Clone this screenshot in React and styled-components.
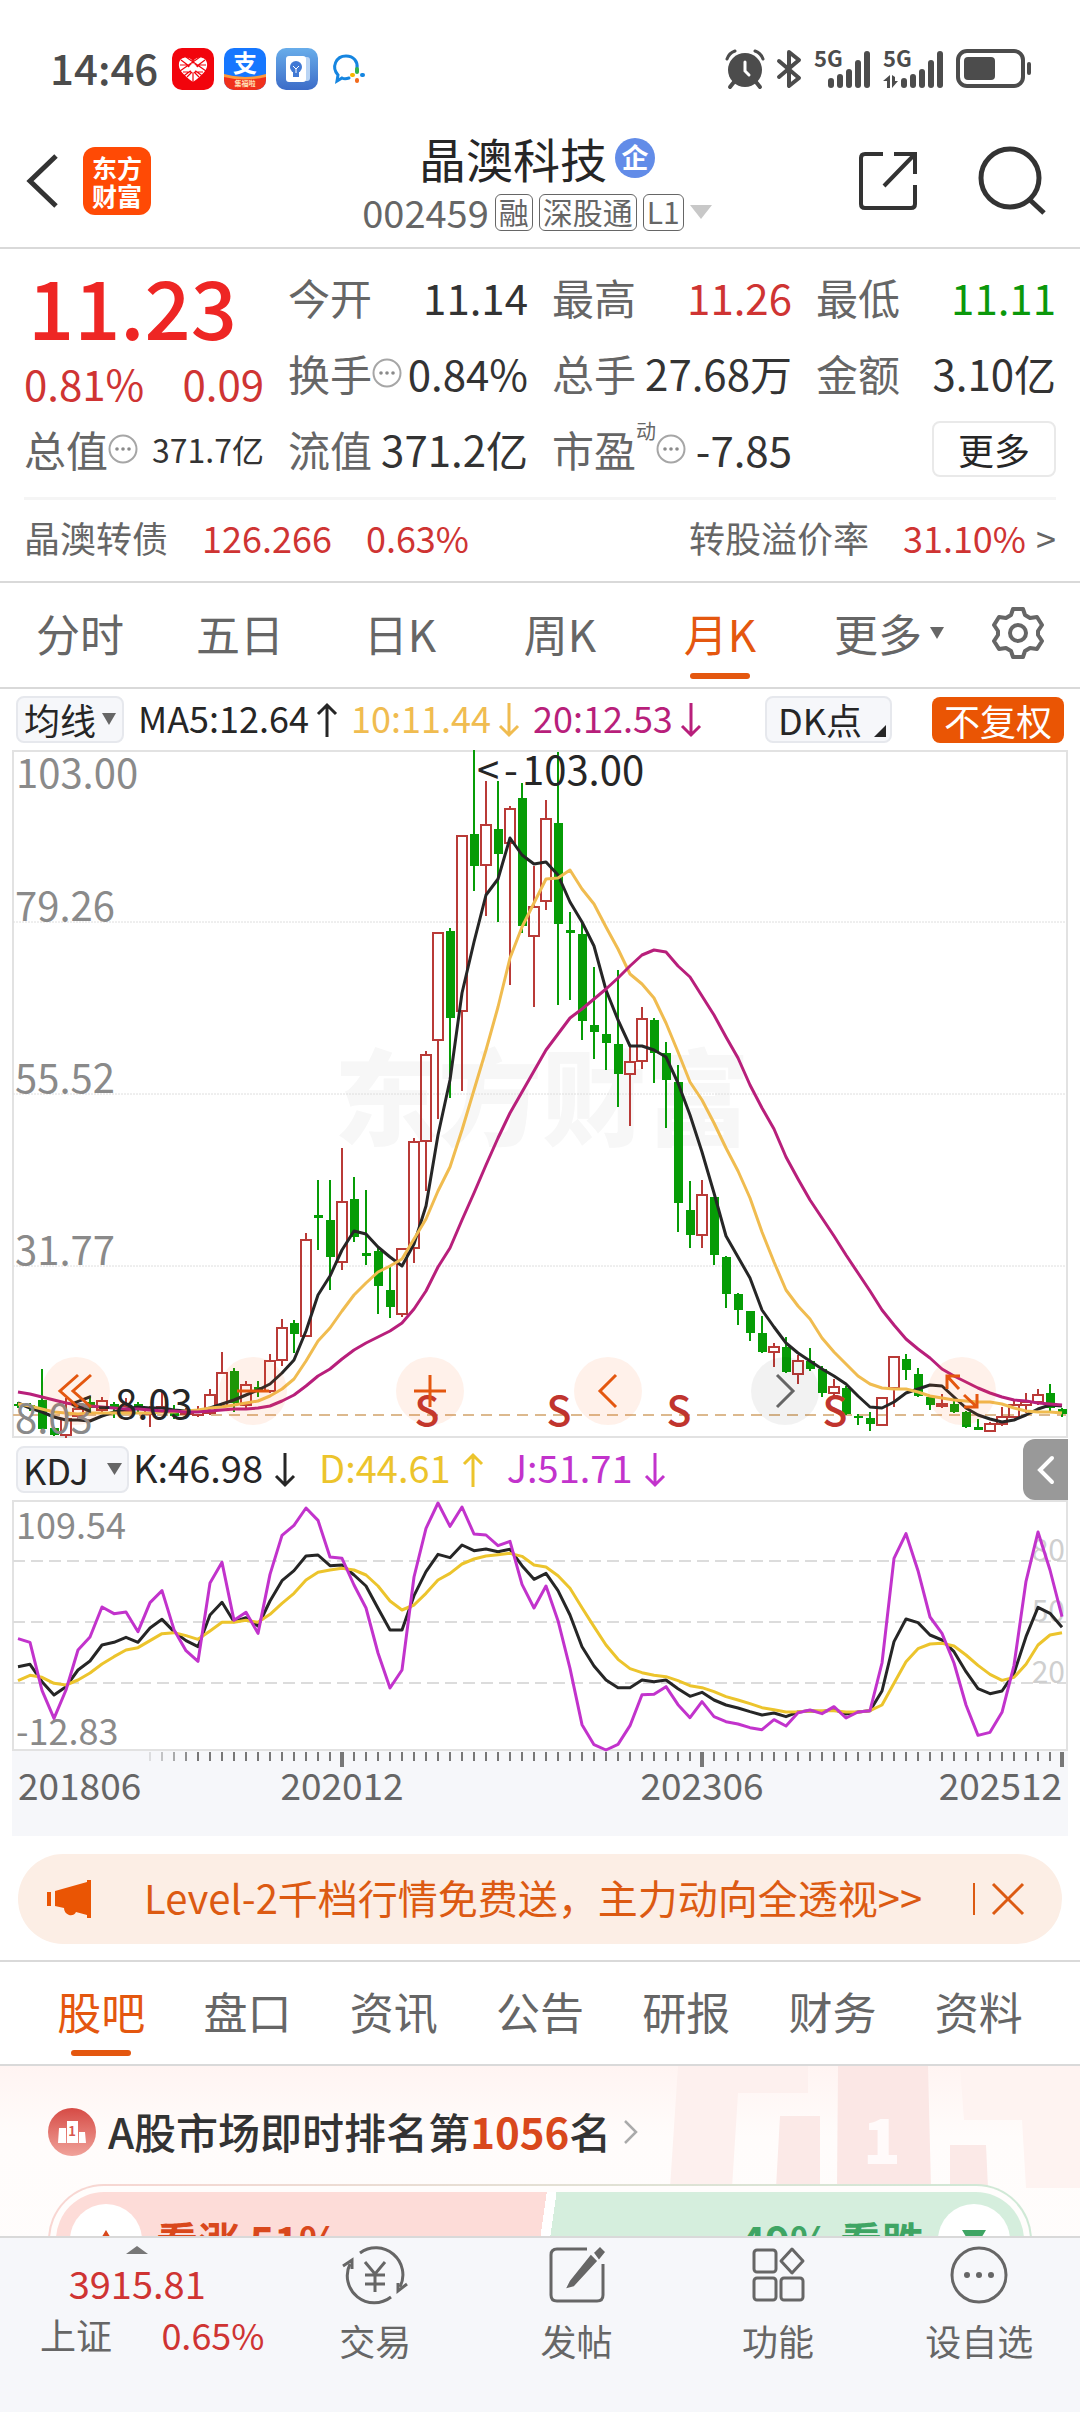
import React from "react";
import styled, { createGlobalStyle } from "styled-components";

const color = {
  ink: "#262626",
  text: "#333333",
  label: "#666666",
  muted: "#8a8a8a",
  rise: "#cf3433",
  price: "#ee2624",
  fall: "#0b980b",
  brand: "#e4570f",
  line: "#d9d9d9",
  panel: "#f6f7fa",
  ma10: "#f0bc50",
  ma20: "#b81f7b",
  kdjD: "#ecc42c",
  kdjJ: "#c233cc",
};

const GlobalStyle = createGlobalStyle`
  * { box-sizing: border-box; }
  body { margin: 0; background: #fff; }
  body, button {
    font-family: "Noto Sans CJK SC", "Noto Sans", sans-serif;
    color: ${color.ink};
  }
  button {
    border: 0;
    padding: 0;
    margin: 0;
    background: none;
    cursor: pointer;
  }
  a { color: inherit; text-decoration: none; }
  svg { display: block; flex: none; overflow: visible; }
  h1, h2, p, dl, dt, dd { margin: 0; font-weight: 400; }
`;

const Screen = styled.div`
  height: 100vh;
  display: flex;
  flex-direction: column;
  background: #fff;
`;

const Content = styled.main`
  flex: 1;
  min-height: 0;
  overflow: hidden;
`;

/* ---------- status bar ---------- */

const StatusBar = styled.div`
  display: flex;
  align-items: center;
  gap: 14px;
  height: 115px;
  padding: 22px 48px 0 50px;
  color: #4c4c4c;
`;

const Clock = styled.span`
  font-size: 42px;
  line-height: 42px;
  font-weight: 500;
  padding-bottom: 4px;
`;

const StatusIcons = styled.div`
  display: flex;
  align-items: center;
  gap: ${(p) => p.$gap}px;
  margin-left: ${(p) => (p.$end ? "auto" : "0")};
`;

/* ---------- header ---------- */

const Header = styled.header`
  display: grid;
  grid-template-columns: 1fr auto 1fr;
  align-items: center;
  height: 134px;
  padding: 0 32px 0 26px;
  border-bottom: 2px solid ${color.line};
`;

const HeaderSide = styled.div`
  display: flex;
  align-items: center;
  gap: ${(p) => p.$gap}px;
  justify-content: ${(p) => (p.$end ? "flex-end" : "flex-start")};
`;

const Logo = styled.a`
  display: flex;
  flex-direction: column;
  align-items: center;
  justify-content: center;
  width: 68px;
  height: 68px;
  border-radius: 12px;
  background: #ff4a05;
  color: #fff;
  font-size: 25px;
  line-height: 28px;
  font-weight: 700;
`;

const TitleBlock = styled.div`
  display: flex;
  flex-direction: column;
  align-items: center;
  padding-top: 2px;
`;

const TitleRow = styled.div`
  display: flex;
  align-items: center;
  gap: 8px;
`;

const Title = styled.h1`
  font-size: 47px;
  line-height: 60px;
`;

const Badge = styled.span`
  width: 40px;
  height: 40px;
  border-radius: 50%;
  background: #628ce8;
  color: #fff;
  font-size: 27px;
  line-height: 37px;
  font-weight: 700;
  text-align: center;
`;

const CodeRow = styled.div`
  display: flex;
  align-items: center;
  gap: 6px;
  color: ${color.label};
  font-size: 38px;
  line-height: 48px;
`;

const Tag = styled.span`
  height: 37px;
  padding: 0 3px;
  border: 1px solid ${color.label};
  border-radius: 6px;
  font-size: 30px;
  line-height: 32px;
`;

/* ---------- quote ---------- */

const Quote = styled.section`
  padding: 10px 24px 8px;
  border-bottom: 2px solid ${color.line};
`;

const QuoteGrid = styled.div`
  display: grid;
  grid-template-columns: repeat(4, 1fr);
  grid-auto-rows: 76px;
  column-gap: 24px;
`;

const PriceBlock = styled.div`
  grid-row: span 2;
`;

const Price = styled.p`
  padding-left: 4px;
  font-size: 81px;
  line-height: 92px;
  font-weight: 500;
  color: ${color.price};
`;

const Change = styled.p`
  display: flex;
  justify-content: space-between;
  font-size: 42px;
  line-height: 64px;
  color: ${color.rise};
`;

const Cell = styled.dl`
  display: flex;
  align-items: center;
  line-height: 60px;
`;

const CellLabel = styled.dt`
  display: flex;
  align-items: center;
  font-size: 42px;
  color: ${color.label};
  white-space: nowrap;
`;

const CellValue = styled.dd`
  margin-left: auto;
  font-size: ${(p) => (p.$small ? 32 : 42)}px;
  color: ${(p) => color[p.$tone] || color.text};
  white-space: nowrap;
`;

const Sup = styled.sup`
  align-self: flex-start;
  font-size: 20px;
  line-height: 24px;
`;

const MoreButton = styled.button`
  align-self: center;
  justify-self: end;
  width: 124px;
  height: 56px;
  border: 2px solid #e9e9e9;
  border-radius: 8px;
  font-size: 36px;
  line-height: 48px;
`;

const BondRow = styled.a`
  display: flex;
  align-items: center;
  gap: 34px;
  height: 76px;
  margin-top: 10px;
  border-top: 3px solid #f5f5f5;
  font-size: 36px;
  line-height: 48px;
  color: ${color.label};
`;

const Rise = styled.span`
  color: ${color.rise};
`;

const Premium = styled.span`
  display: flex;
  align-items: center;
  gap: 10px;
`;

const PushRight = styled.span`
  margin-left: auto;
`;

/* ---------- tabs ---------- */

const Tabs = styled.nav`
  display: grid;
  grid-template-columns: ${(p) => p.$columns};
  height: ${(p) => p.$height}px;
  padding: 0 ${(p) => p.$pad}px;
  border-bottom: 2px solid ${color.line};
`;

const Tab = styled.button`
  position: relative;
  display: flex;
  align-items: center;
  justify-content: center;
  gap: 8px;
  padding-bottom: 4px;
  font-size: 44px;
  line-height: 60px;
  color: ${(p) => (p.$active ? color.brand : color.label)};

  &::after {
    content: "";
    display: ${(p) => (p.$active ? "block" : "none")};
    position: absolute;
    bottom: 8px;
    left: calc(50% - 30px);
    width: 60px;
    height: 6px;
    border-radius: 3px;
    background: ${color.brand};
  }
`;

/* ---------- indicator rows ---------- */

const Legend = styled.div`
  display: flex;
  align-items: center;
  gap: ${(p) => p.$gap}px;
  height: ${(p) => p.$height}px;
  padding: 0 16px;
`;

const Chip = styled.button`
  position: relative;
  display: flex;
  align-items: center;
  justify-content: space-between;
  height: 47px;
  width: ${(p) => p.$width}px;
  padding: 0 ${(p) => p.$pad}px 2px;
  border: 2px solid #e6e8ed;
  border-radius: 8px;
  background: ${color.panel};
  font-size: 36px;
  line-height: 40px;
  white-space: nowrap;
`;

const AdjustButton = styled.button`
  width: 132px;
  height: 46px;
  margin-left: 26px;
  border-radius: 8px;
  background: #ea5504;
  color: #fff;
  font-size: 36px;
  line-height: 42px;
`;

const Corner = styled.span`
  position: absolute;
  right: 4px;
  bottom: 4px;
  border-left: 12px solid transparent;
  border-bottom: 12px solid ${color.ink};
`;

const Reading = styled.span`
  display: flex;
  align-items: center;
  gap: ${(p) => p.$gap}px;
  font-size: ${(p) => p.$size}px;
  line-height: 48px;
  color: ${(p) => p.$tone};
`;

const ReadingText = styled.span`
  padding-bottom: 6px;
`;

const CollapseButton = styled.button`
  display: flex;
  align-items: center;
  justify-content: center;
  width: 45px;
  height: 61px;
  margin: 0 -4px 0 auto;
  border-radius: 12px 0 0 12px;
  background: #999;
`;

/* ---------- chart ---------- */

const ChartPanel = styled.figure`
  position: relative;
  margin: 0 12px;
`;

const ChartSvg = styled.svg`
  width: 100%;
  height: auto;
  overflow: visible;
  font-family: "Noto Sans CJK SC", "Noto Sans", sans-serif;
`;

const ChartTools = styled.div`
  position: absolute;
  left: 30px;
  right: 72px;
  bottom: 13px;
  display: flex;
  justify-content: space-between;
`;

const ToolButton = styled.button`
  display: flex;
  align-items: center;
  justify-content: center;
  width: 68px;
  height: 68px;
  border-radius: 50%;
  background: ${(p) => (p.$off ? "rgba(0,0,0,.05)" : "rgba(255,96,24,.09)")};
`;

const AxisSvg = styled(ChartSvg)`
  background: ${color.panel};
`;

/* ---------- banner ---------- */

const Banner = styled.aside`
  display: flex;
  align-items: center;
  height: 90px;
  margin: 18px 18px 16px;
  padding: 0 38px 0 28px;
  border-radius: 45px;
  background: #fceee5;
  color: #dc5a12;
`;

const BannerLink = styled.a`
  flex: 1;
  padding: 0 0 4px 50px;
  font-size: 40px;
  line-height: 56px;
  white-space: nowrap;
`;

const CloseButton = styled.button`
  padding-left: 17px;
  border-left: 2px solid #dc5a12;
`;

const Divider = styled.hr`
  height: 2px;
  margin: 0;
  border: 0;
  background: ${color.line};
`;

/* ---------- ranking and vote ---------- */

const Community = styled.section`
  position: relative;
  padding: 0 48px;
  background: linear-gradient(#fff4f2, #fffcfb 70px, #fffdfc);
`;

const Podium = styled.svg`
  position: absolute;
  top: 0;
  right: 0;
`;

const RankLink = styled.a`
  position: relative;
  display: flex;
  align-items: center;
  gap: 12px;
  height: 118px;
  padding-top: 14px;
  font-size: 42px;
  line-height: 56px;
  font-weight: 500;
  color: ${color.text};

  strong {
    font-weight: 700;
    color: #d9481c;
  }
`;

const RankText = styled.span`
  padding-bottom: 3px;
`;

const VoteFrame = styled.div`
  position: relative;
  height: 112px;
  padding: 6px;
  border: 2px solid transparent;
  border-radius: 56px;
  background:
    linear-gradient(#fffdfc, #fffdfc) padding-box,
    linear-gradient(90deg, #f9d6d2, #cfe9d6) border-box;
`;

const VoteBar = styled.div`
  display: flex;
  justify-content: space-between;
  height: 96px;
  border-radius: 48px;
  background: linear-gradient(98deg, #fddcd8 50%, #fff 50%, #fff 51%, #d5eedd 51%);
`;

const VoteButton = styled.button`
  display: flex;
  align-items: center;
  gap: 14px;
  padding: 0 14px;
  font-size: 42px;
  line-height: 56px;
  font-weight: 700;
  color: ${(p) => p.$tone};
`;

const VoteDot = styled.span`
  display: flex;
  align-items: center;
  justify-content: center;
  width: 72px;
  height: 72px;
  border-radius: 50%;
  background: #fff;
`;

/* ---------- bottom bar ---------- */

const BottomBar = styled.nav`
  flex: none;
  display: grid;
  grid-template-columns: 274fr repeat(4, 201fr);
  height: 176px;
  border-top: 2px solid ${color.line};
  background: ${color.panel};
`;

const IndexButton = styled.button`
  display: flex;
  flex-direction: column;
  align-items: center;
  gap: 3px;
  padding-top: 8px;
  color: ${color.rise};
  font-size: 38px;
  line-height: 52px;
`;

const IndexRow = styled.span`
  display: flex;
  align-self: stretch;
  justify-content: space-between;
  padding: 0 10px 0 40px;
  font-size: 36px;
  line-height: 44px;
  color: ${color.label};
`;

const NavButton = styled.button`
  display: flex;
  flex-direction: column;
  align-items: center;
  gap: 10px;
  padding-top: 8px;
  color: ${color.label};
  font-size: 36px;
  line-height: 52px;
`;

/* ---------- icons ---------- */

const Triangle = ({ w = 14, h = 12, fill = color.label, up }) => (
  <svg width={w} height={h} viewBox="0 0 10 10" preserveAspectRatio="none" aria-hidden="true">
    <path d={up ? "M0 10h10L5 0z" : "M0 0h10L5 10z"} fill={fill} />
  </svg>
);

const TrendArrow = ({ up }) => (
  <svg width="20" height="36" viewBox="0 0 20 36" fill="none" stroke="currentColor" strokeWidth="3">
    {up ? <path d="M10 35V3M1 12l9-9 9 9" /> : <path d="M10 1v32M1 24l9 9 9-9" />}
  </svg>
);

const InfoDots = () => (
  <svg width="30" height="30" viewBox="0 0 30 30">
    <circle cx="15" cy="15" r="13.5" fill="none" stroke="#a6a6a6" strokeWidth="2" />
    {[9, 15, 21].map((x) => (
      <circle key={x} cx={x} cy="15" r="1.8" fill="#8a8a8a" />
    ))}
  </svg>
);

const HeartApp = () => (
  <svg width="42" height="42" viewBox="0 0 42 42">
    <rect width="42" height="42" rx="10" fill="#f2040c" />
    <path d="M21 34C10 26 6 21 7 15c1-6 9-8 14-2 5-6 13-4 14 2 1 6-3 11-14 19z" fill="#fff" />
    <path
      d="M9 12l24 18M14 9l20 14M33 12L9 30M28 9L8 23M21 10v24M8 17h26M11 24h20M15 29l12-12M27 29L15 17"
      stroke="#f2040c"
      strokeWidth="1.2"
    />
    <path d="M21 15l5 5-5 5-5-5z" fill="#fff" />
  </svg>
);

const PayApp = () => (
  <svg width="42" height="42" viewBox="0 0 42 42">
    <defs>
      <clipPath id="payClip">
        <rect width="42" height="42" rx="10" />
      </clipPath>
    </defs>
    <g clipPath="url(#payClip)">
      <rect width="42" height="42" fill="#1677ff" />
      <path d="M0 27q21 6 42 0v15H0z" fill="#f0301c" />
      <path d="M0 26q21 6 42 0v3q-21 5-42 0z" fill="#ff9a3c" />
    </g>
    <text x="21" y="24" fontSize="24" fontWeight="700" fill="#fff" textAnchor="middle">支</text>
    <text x="21" y="38" fontSize="7" fontWeight="700" fill="#ffe3b8" textAnchor="middle">集福啦</text>
  </svg>
);

const BulbApp = () => (
  <svg width="42" height="42" viewBox="0 0 42 42">
    <defs>
      <linearGradient id="bulbSky" x2="0" y2="1">
        <stop stopColor="#68adea" />
        <stop offset="1" stopColor="#3c6cc8" />
      </linearGradient>
    </defs>
    <rect width="42" height="42" rx="10" fill="url(#bulbSky)" />
    <rect x="14" y="9" width="20" height="24" rx="3" fill="#b9d4f4" />
    <rect x="10" y="8" width="20" height="26" rx="3" fill="#fff" />
    <circle cx="20" cy="19" r="6" fill="#4179d4" />
    <path d="M17 23h6v6h-6z" fill="#4179d4" />
    <path d="M17 18l3 3 3-3M20 21v4" stroke="#fff" fill="none" />
  </svg>
);

const ChatApp = () => (
  <svg width="34" height="30" viewBox="0 0 34 30" fill="none" strokeLinecap="round">
    <path d="M17 24c-3 1-5 1-7 0l-5 3 1-6C-1 13 4 2 14 2c8 0 12 6 11 12" stroke="#1585e0" strokeWidth="3" />
    <path d="M25 15v3" stroke="#35b34a" strokeWidth="4" />
    <path d="M30 21h1" stroke="#1585e0" strokeWidth="4" />
    <path d="M20 21h1" stroke="#f7b500" strokeWidth="4" />
    <path d="M25 26v1" stroke="#f26a1b" strokeWidth="4" />
  </svg>
);

const AlarmIcon = () => (
  <svg width="38" height="38" viewBox="0 0 38 38">
    <circle cx="19" cy="20" r="17" fill="#4c4c4c" />
    <path d="M1 9q2-6 8-8M37 9q-2-6-8-8" stroke="#4c4c4c" strokeWidth="3" strokeLinecap="round" fill="none" />
    <path d="M8 32l-4 5M30 32l4 5" stroke="#4c4c4c" strokeWidth="4" strokeLinecap="round" fill="none" />
    <path d="M19 12v9l4 4" stroke="#fff" strokeWidth="3" strokeLinecap="round" fill="none" />
  </svg>
);

const BluetoothIcon = () => (
  <svg width="26" height="38" viewBox="0 0 26 38" fill="none" stroke="#4c4c4c" strokeWidth="4" strokeLinecap="round" strokeLinejoin="round">
    <path d="M3 11l20 17-10 8V2l10 8L3 27" />
  </svg>
);

const SignalIcon = ({ data }) => {
  const start = data ? 18 : 14;
  return (
    <svg width={start + 43} height="38" viewBox={`0 0 ${start + 43} 38`} fill="#4c4c4c">
      <text x="0" y="17" fontSize="22" fontWeight="700">5G</text>
      {[10, 14, 19, 28, 37].map((h, n) => (
        <rect key={h} x={start + n * 9} y={38 - h} width="6" height={h} rx="3" />
      ))}
      {data && <path d="M7 25v13H4v-7H0zM9 25v13l6-7h-3v-4z" />}
    </svg>
  );
};

const BatteryIcon = () => (
  <svg width="76" height="39" viewBox="0 0 76 39">
    <rect x="2" y="2" width="65" height="35" rx="9" fill="none" stroke="#4c4c4c" strokeWidth="4" />
    <rect x="8" y="8" width="31" height="23" rx="4" fill="#4c4c4c" />
    <rect x="71" y="13" width="4" height="13" rx="2" fill="#4c4c4c" />
  </svg>
);

const BackIcon = () => (
  <svg width="32" height="54" viewBox="0 0 32 54" fill="none" stroke={color.text} strokeWidth="5">
    <path d="M30 2L4 27l26 25" />
  </svg>
);

const ShareIcon = () => (
  <svg width="60" height="60" viewBox="0 0 60 60" fill="none" stroke={color.text} strokeWidth="4">
    <path d="M25 3H7q-4 0-4 4v46q0 4 4 4h46q4 0 4-4V34" />
    <path d="M36 3h21v20M57 3L26 35" />
  </svg>
);

const SearchIcon = () => (
  <svg width="70" height="70" viewBox="0 0 70 70" fill="none" stroke={color.text} strokeWidth="5">
    <circle cx="32" cy="32" r="29" />
    <path d="M52 54l14 13" />
  </svg>
);

const GearIcon = () => (
  <svg width="52" height="52" viewBox="0 0 52 52" fill="none" stroke={color.label} strokeWidth="4" strokeLinejoin="round">
    <path d="M21 2h10l2 6 5 3 7-1 5 8-4 6v4l4 6-5 8-7-1-5 3-2 6H21l-2-6-5-3-7 1-5-8 4-6v-4l-4-6 5-8 7 1 5-3z" />
    <circle cx="26" cy="26" r="8" />
  </svg>
);

const MegaphoneIcon = () => (
  <svg width="48" height="40" viewBox="0 0 48 40" fill="#ea5504">
    <path d="M1 13h4v14H1zM9 12L41 3V1h4v38h-4v-3l-11-3q-2 4-7 3-5-2-5-7l-9-2z" />
  </svg>
);

const CloseIcon = () => (
  <svg width="32" height="32" viewBox="0 0 32 32" stroke="#dc5a12" strokeWidth="3">
    <path d="M1 1l30 30M31 1L1 31" />
  </svg>
);

const RankIcon = () => (
  <svg width="48" height="48" viewBox="0 0 48 48">
    <defs>
      <linearGradient id="rankRed" x2="0" y2="1">
        <stop stopColor="#d64b45" />
        <stop offset="1" stopColor="#f0a29a" />
      </linearGradient>
    </defs>
    <circle cx="24" cy="24" r="24" fill="url(#rankRed)" />
    <path d="M11 20h7v15h-8zM19 13h11v22H19zM31 24h6l1 11h-7z" fill="#fff" />
    <text x="24" y="28" fontSize="13" fontWeight="700" fill="#d9564f" textAnchor="middle">1</text>
  </svg>
);

const ChevronIcon = () => (
  <svg width="16" height="26" viewBox="0 0 16 26" fill="none" stroke="#aaa" strokeWidth="2.5">
    <path d="M2 2l11 11L2 24" />
  </svg>
);

const TradeIcon = () => (
  <svg width="66" height="58" viewBox="0 0 66 58" fill="none" stroke="currentColor" strokeWidth="3">
    <path d="M18 7A27 27 0 0 1 58 41M49 51A27 27 0 0 1 8 18" />
    <path d="M1 20l9-6v9M65 38l-9 7v-8" />
    <path d="M23 16l10 12 10-12M33 28v18M23 29h20M23 38h20" />
  </svg>
);

const PostIcon = () => (
  <svg width="56" height="58" viewBox="0 0 56 58" fill="none" stroke="currentColor" strokeWidth="3">
    <path d="M38 3H8Q2 3 2 9v40q0 6 6 6h40q6 0 6-6V18" />
    <path d="M22 36l20-25 4 4-22 24-4 1zM47 7l4-4 3 3-4 5z" fill="currentColor" />
  </svg>
);

const FunctionsIcon = () => (
  <svg width="54" height="58" viewBox="0 0 54 58" fill="none" stroke="currentColor" strokeWidth="3">
    <rect x="3" y="4" width="22" height="22" rx="3" />
    <rect x="3" y="32" width="22" height="22" rx="3" />
    <rect x="30" y="32" width="22" height="22" rx="3" />
    <path d="M41 3l11 12-11 12-11-12z" strokeLinejoin="round" />
  </svg>
);

const WatchIcon = () => (
  <svg width="58" height="58" viewBox="0 0 58 58">
    <circle cx="29" cy="29" r="27" fill="none" stroke="currentColor" strokeWidth="3" />
    {[17, 29, 41].map((x) => (
      <circle key={x} cx={x} cy="29" r="3" fill="currentColor" />
    ))}
  </svg>
);

/* ---------- chart data ---------- */

// One month per entry: rising flag, then high, body top, body bottom, low.
const candles = [
  [0, 1402, 1404, 1406, 1408], [0, 1403, 1405, 1408, 1411], [0, 1369, 1400, 1429, 1431],
  [0, 1427, 1428, 1435, 1436], [1, 1398, 1418, 1435, 1438], [1, 1405, 1408, 1416, 1420],
  [0, 1396, 1402, 1408, 1412], [1, 1397, 1400, 1410, 1412], [0, 1402, 1404, 1409, 1418],
  [1, 1398, 1405, 1411, 1414], [0, 1402, 1404, 1409, 1412], [1, 1406, 1409, 1414, 1427],
  [1, 1390, 1406, 1411, 1413], [0, 1405, 1409, 1416, 1419], [1, 1408, 1410, 1414, 1416],
  [1, 1406, 1409, 1415, 1417], [1, 1389, 1394, 1413, 1415], [1, 1352, 1372, 1406, 1408],
  [0, 1368, 1371, 1403, 1412], [1, 1381, 1384, 1405, 1408], [0, 1381, 1387, 1391, 1397],
  [1, 1354, 1360, 1391, 1393], [1, 1319, 1327, 1360, 1366], [0, 1320, 1323, 1334, 1353],
  [1, 1233, 1239, 1336, 1336], [0, 1180, 1215, 1218, 1250], [0, 1180, 1220, 1257, 1290],
  [1, 1148, 1201, 1262, 1270], [0, 1177, 1199, 1237, 1242], [0, 1190, 1253, 1256, 1265],
  [0, 1248, 1251, 1286, 1314], [0, 1266, 1290, 1307, 1318], [1, 1248, 1248, 1314, 1317],
  [1, 1138, 1141, 1248, 1263], [1, 1051, 1054, 1141, 1191], [1, 932, 932, 1040, 1119],
  [0, 928, 931, 1018, 1098], [1, 835, 835, 1011, 1091], [0, 750, 834, 866, 891],
  [1, 781, 824, 865, 916], [0, 781, 829, 854, 922], [1, 806, 808, 843, 985],
  [0, 783, 798, 926, 933], [1, 866, 906, 936, 1007], [1, 800, 818, 901, 910],
  [0, 752, 823, 924, 1005], [0, 912, 930, 933, 1000], [0, 922, 934, 1021, 1040],
  [0, 967, 1025, 1032, 1059], [0, 990, 1034, 1043, 1070], [0, 970, 1044, 1074, 1107],
  [1, 1047, 1061, 1074, 1126], [1, 1007, 1018, 1061, 1069], [0, 1018, 1020, 1053, 1083],
  [0, 1042, 1053, 1080, 1128], [0, 1065, 1082, 1203, 1232], [0, 1181, 1210, 1235, 1248],
  [1, 1180, 1194, 1235, 1248], [0, 1197, 1197, 1255, 1265], [0, 1256, 1257, 1294, 1308],
  [0, 1293, 1294, 1310, 1325], [0, 1311, 1311, 1333, 1341], [0, 1316, 1333, 1352, 1353],
  [1, 1343, 1346, 1352, 1367], [0, 1337, 1347, 1372, 1373], [1, 1355, 1360, 1374, 1384],
  [0, 1348, 1361, 1369, 1371], [0, 1366, 1369, 1393, 1397], [1, 1379, 1386, 1393, 1397],
  [0, 1386, 1388, 1414, 1415], [0, 1414, 1416, 1418, 1425], [0, 1412, 1418, 1424, 1431],
  [1, 1397, 1397, 1425, 1426], [1, 1356, 1356, 1388, 1407], [0, 1354, 1359, 1370, 1380],
  [0, 1368, 1374, 1396, 1397], [0, 1397, 1397, 1405, 1410], [1, 1394, 1403, 1406, 1408],
  [0, 1397, 1404, 1412, 1413], [0, 1411, 1412, 1427, 1428], [0, 1419, 1427, 1430, 1430],
  [1, 1422, 1423, 1431, 1432], [1, 1407, 1416, 1424, 1426], [1, 1400, 1404, 1417, 1418],
  [1, 1393, 1401, 1405, 1413], [1, 1389, 1394, 1402, 1405], [0, 1384, 1393, 1408, 1411],
  [0, 1408, 1409, 1414, 1417],
];

const ma5 = [
  1403, 1408, 1412, 1417, 1420, 1420, 1421, 1416, 1412, 1409, 1407, 1408, 1408, 1410, 1411, 1411,
  1408, 1404, 1400, 1395, 1390, 1384, 1373, 1360, 1331, 1295, 1276, 1250, 1231, 1234, 1247, 1257,
  1266, 1244, 1206, 1135, 1080, 993, 942, 895, 879, 838, 855, 864, 862, 875, 902, 922, 946, 990,
  1020, 1046, 1046, 1050, 1057, 1083, 1115, 1152, 1193, 1236, 1257, 1278, 1310, 1327, 1343, 1353,
  1361, 1369, 1376, 1384, 1396, 1407, 1408, 1402, 1393, 1389, 1385, 1386, 1397, 1408, 1415, 1419,
  1422, 1420, 1415, 1409, 1405, 1406,
];

const ma10 = [
  1404, 1406, 1409, 1412, 1413, 1414, 1413, 1413, 1413, 1413, 1413, 1413, 1412, 1412, 1411, 1410,
  1408, 1407, 1405, 1403, 1401, 1396, 1389, 1379, 1361, 1341, 1328, 1311, 1295, 1283, 1272, 1266,
  1259, 1239, 1219, 1191, 1167, 1130, 1090, 1050, 1007, 958, 927, 903, 879, 878, 870, 889, 904,
  927, 949, 974, 984, 998, 1023, 1052, 1082, 1100, 1123, 1148, 1171, 1198, 1232, 1262, 1290, 1306,
  1319, 1338, 1352, 1364, 1376, 1384, 1388, 1389, 1389, 1392, 1396, 1398, 1400, 1401, 1402, 1402,
  1404, 1408, 1411, 1412, 1412, 1413,
];

const ma20 = [
  1392, 1394, 1397, 1400, 1403, 1405, 1406, 1407, 1408, 1409, 1409, 1410, 1411, 1411, 1412, 1412,
  1411, 1410, 1409, 1409, 1408, 1406, 1401, 1395, 1386, 1376, 1369, 1359, 1350, 1343, 1337, 1331,
  1323, 1309, 1291, 1267, 1248, 1220, 1193, 1165, 1138, 1113, 1092, 1071, 1050, 1034, 1018, 1009,
  999, 989, 978, 966, 955, 950, 952, 966, 977, 996, 1015, 1037, 1058, 1085, 1108, 1129, 1157, 1179,
  1200, 1218, 1236, 1255, 1273, 1291, 1310, 1325, 1339, 1349, 1358, 1369, 1376, 1382, 1388, 1393,
  1397, 1400, 1401, 1403, 1404, 1405,
];

// Oscillator samples, three units to one unit of chart height.
const kLine = [
  710, 703, 755, 795, 770, 720, 693, 645, 637, 622, 637, 594, 568, 605, 632, 650, 555, 517, 575,
  563, 588, 513, 452, 422, 378, 375, 407, 405, 435, 468, 535, 600, 600, 497, 425, 373, 383, 345,
  362, 357, 365, 358, 407, 448, 430, 482, 555, 650, 708, 750, 773, 773, 750, 755, 750, 776, 799,
  787, 810, 825, 834, 845, 855, 849, 860, 846, 842, 845, 838, 852, 846, 842, 783, 635, 567, 578,
  615, 630, 665, 725, 776, 791, 783, 730, 620, 532, 550, 592,
];

const dLine = [
  752, 736, 742, 760, 765, 750, 729, 702, 680, 660, 653, 632, 611, 608, 617, 628, 603, 577, 577,
  571, 577, 553, 520, 490, 450, 427, 420, 415, 420, 435, 468, 513, 540, 525, 490, 450, 430, 402,
  387, 378, 374, 370, 379, 405, 411, 437, 475, 533, 590, 645, 688, 716, 728, 736, 740, 752, 767,
  773, 785, 800, 810, 821, 833, 839, 846, 845, 843, 842, 842, 846, 846, 842, 825, 760, 695, 656,
  642, 640, 648, 675, 706, 733, 751, 742, 703, 645, 615, 608,
];

const jLine = kLine.map((k, i) => 3 * k - 2 * dLine[i]);

const monthX = (i) => 18 + 12 * i;
const toPoints = (list, scale = 1) => list.map((v, i) => `${monthX(i)},${v / scale}`).join(" ");

const Line = ({ points, stroke }) => (
  <polyline points={points} fill="none" stroke={stroke} strokeWidth="3" strokeLinejoin="round" />
);

const Candle = ({ index, data: [up, high, top, bottom, low] }) => {
  const x = monthX(index);
  const ink = up ? "#b93a37" : "#069c06";
  return (
    <g stroke={ink} strokeWidth="2" fill={up ? "none" : ink}>
      <path d={`M${x} ${high}V${top}M${x} ${bottom}V${low}`} />
      {up ? (
        <rect x={x - 5} y={top + 1} width="10" height={Math.max(bottom - top - 1, 1)} />
      ) : (
        <rect x={x - 4} y={top} width="9" height={bottom - top} stroke="none" />
      )}
    </g>
  );
};

const PriceChart = () => (
  <ChartSvg viewBox="12 750 1056 688" role="img" aria-label="月K线">
    <text x="542" y="1138" fontSize="104" fontWeight="900" fill="#f7f7f7" textAnchor="middle">
      东方财富
    </text>
    <rect x="13" y="751" width="1054" height="686" fill="none" stroke="#e2e2e2" strokeWidth="2" />
    {[922, 1094, 1266].map((y) => (
      <path key={y} d={`M13 ${y}H1066`} stroke="#dedede" strokeWidth="1" strokeDasharray="2 1" />
    ))}
    <path d="M13 1415H1066" stroke="#dcb98e" strokeWidth="2" strokeDasharray="11 7" />
    {candles.map((data, i) => (
      <Candle key={i} index={i} data={data} />
    ))}
    <Line points={toPoints(ma5)} stroke={color.ink} />
    <Line points={toPoints(ma10)} stroke={color.ma10} />
    <Line points={toPoints(ma20)} stroke={color.ma20} />
    <g fontSize="40" fill={color.muted}>
      <text x="16" y="788">103.00</text>
      <text x="15" y="921">79.26</text>
      <text x="15" y="1093">55.52</text>
      <text x="15" y="1265">31.77</text>
      <text x="15" y="1433">8.03</text>
    </g>
    <g fontSize="40" fill={color.ink}>
      <text x="477" y="785">&lt;<tspan x="504">-</tspan><tspan x="522">103.00</tspan></text>
      <text x="70" y="1419">&lt;<tspan x="97">-</tspan><tspan x="115">8.03</tspan></text>
    </g>
    <g fontSize="41" fontWeight="500" fill="#c0342e" textAnchor="middle">
      {[427, 559, 679, 835].map((x) => (
        <text key={x} x={x} y="1426">S</text>
      ))}
    </g>
  </ChartSvg>
);

const KdjChart = () => (
  <ChartSvg viewBox="12 71 1056 250" role="img" aria-label="KDJ">
    <rect x="13" y="71" width="1054" height="249" fill="none" stroke="#e2e2e2" strokeWidth="2" />
    {[80, 50, 20].map((level, n) => (
      <g key={level}>
        <path d={`M13 ${131 + n * 61}H1066`} stroke="#dcdcdc" strokeWidth="2" strokeDasharray="12 6" />
        <text x="1065" y={131 + n * 61} fontSize="30" fill="#cfcfcf" textAnchor="end">{level}</text>
      </g>
    ))}
    <g fontSize="36" fill={color.muted}>
      <text x="16" y="109">109.54</text>
      <text x="16" y="315">-12.83</text>
    </g>
    <Line points={toPoints(kLine, 3)} stroke={color.ink} />
    <Line points={toPoints(dLine, 3)} stroke={color.kdjD} />
    <Line points={toPoints(jLine, 3)} stroke={color.kdjJ} />
  </ChartSvg>
);

const TimeAxis = () => (
  <AxisSvg viewBox="12 0 1056 85" role="img" aria-label="时间轴">
    {candles.map((_, i) => {
      if (i < 11) return null;
      const major = i % 30 === 27;
      return (
        <path
          key={i}
          d={`M${monthX(i)} 1V${major ? 16 : 10}`}
          stroke="#777"
          strokeWidth={major ? 4 : 2}
          opacity={Math.min(1, (i - 10) / 5)}
        />
      );
    })}
    <g fontSize="37" fill={color.label}>
      <text x="18" y="49">201806</text>
      <text x="342" y="49" textAnchor="middle">202012</text>
      <text x="702" y="49" textAnchor="middle">202306</text>
      <text x="1062" y="49" textAnchor="end">202512</text>
    </g>
  </AxisSvg>
);

const tools = [
  ["快退", "M20 1L2 17l18 16M33 1L15 17l18 16", 36],
  ["缩小", "M1 17h32", 34],
  ["放大", "M1 17h32M17 1v32", 34],
  ["向左", "M18 1L2 17l16 16", 20],
  ["向右", "M2 1l16 16L2 33", 20],
  ["全屏", "M2 15V2h13M2 2l12 13M19 21l13 12M19 33h13V20", 34],
];

/* ---------- page ---------- */

const facts = [
  { label: "今开", value: "11.14" },
  { label: "最高", value: "11.26", tone: "rise" },
  { label: "最低", value: "11.11", tone: "fall" },
  { label: "换手", value: "0.84%", info: true },
  { label: "总手", value: "27.68万" },
  { label: "金额", value: "3.10亿" },
  { label: "总值", value: "371.7亿", info: true, small: true },
  { label: "流值", value: "371.2亿" },
  { label: "市盈", value: "-7.85", info: true, sup: "动" },
];

const averages = [
  { text: "MA5:12.64", tone: color.ink, up: true },
  { text: "10:11.44", tone: color.ma10 },
  { text: "20:12.53", tone: color.ma20 },
];

const sections = ["股吧", "盘口", "资讯", "公告", "研报", "财务", "资料"];

export default function App() {
  return (
    <Screen>
      <GlobalStyle />
      <Content>
        <StatusBar>
          <Clock>14:46</Clock>
          <StatusIcons $gap={14}>
            <StatusIcons $gap={10}>
              <HeartApp />
              <PayApp />
              <BulbApp />
            </StatusIcons>
            <ChatApp />
          </StatusIcons>
          <StatusIcons $gap={12} $end>
            <AlarmIcon />
            <BluetoothIcon />
            <SignalIcon />
            <SignalIcon data />
            <BatteryIcon />
          </StatusIcons>
        </StatusBar>

        <Header>
          <HeaderSide $gap={25}>
            <button type="button" aria-label="返回"><BackIcon /></button>
            <Logo href="#home"><span>东方</span><span>财富</span></Logo>
          </HeaderSide>
          <TitleBlock>
            <TitleRow>
              <Title>晶澳科技</Title>
              <Badge>企</Badge>
            </TitleRow>
            <CodeRow>
              002459
              <Tag>融</Tag>
              <Tag>深股通</Tag>
              <Tag>L1</Tag>
              <Triangle w={22} h={14} fill="#c8c8c8" />
            </CodeRow>
          </TitleBlock>
          <HeaderSide $gap={60} $end>
            <button type="button" aria-label="分享"><ShareIcon /></button>
            <button type="button" aria-label="搜索"><SearchIcon /></button>
          </HeaderSide>
        </Header>

        <Quote>
          <QuoteGrid>
            <PriceBlock>
              <Price>11.23</Price>
              <Change><span>0.81%</span><span>0.09</span></Change>
            </PriceBlock>
            {facts.map((f) => (
              <Cell key={f.label}>
                <CellLabel>
                  {f.label}
                  {f.sup && <Sup>{f.sup}</Sup>}
                  {f.info && <InfoDots />}
                </CellLabel>
                <CellValue $tone={f.tone} $small={f.small}>{f.value}</CellValue>
              </Cell>
            ))}
            <MoreButton type="button">更多</MoreButton>
          </QuoteGrid>
          <BondRow href="#bond">
            <span>晶澳转债</span>
            <Rise>126.266</Rise>
            <Rise>0.63%</Rise>
            <PushRight>转股溢价率</PushRight>
            <Premium><Rise>31.10%</Rise>&gt;</Premium>
          </BondRow>
        </Quote>

        <Tabs $columns="repeat(5, 160fr) 178fr 80fr 22fr" $height={106} $pad={0}>
          {["分时", "五日", "日K", "周K", "月K"].map((t) => (
            <Tab key={t} type="button" $active={t === "月K"}>{t}</Tab>
          ))}
          <Tab type="button">更多<Triangle /></Tab>
          <Tab type="button" aria-label="设置"><GearIcon /></Tab>
        </Tabs>

        <Legend $gap={14} $height={61}>
          <Chip type="button" $width={108} $pad={6}>均线<Triangle /></Chip>
          {averages.map((a) => (
            <Reading key={a.text} $gap={8} $size={36} $tone={a.tone}>
              <ReadingText>{a.text}</ReadingText>
              <TrendArrow up={a.up} />
            </Reading>
          ))}
          <PushRight>
            <Chip type="button" $width={127} $pad={11}>DK点<Corner /></Chip>
          </PushRight>
          <AdjustButton type="button">不复权</AdjustButton>
        </Legend>

        <ChartPanel>
          <PriceChart />
          <ChartTools>
            {tools.map(([name, d, w]) => (
              <ToolButton key={name} type="button" aria-label={name} $off={name === "向右"}>
                <svg width={w} height="34" viewBox={`0 0 ${w} 34`} fill="none" stroke={name === "向右" ? color.label : color.brand} strokeWidth="3">
                  <path d={d} />
                </svg>
              </ToolButton>
            ))}
          </ChartTools>
        </ChartPanel>

        <Legend $gap={24} $height={63}>
          <Reading $gap={4} $size={38} $tone={color.ink}>
            <Chip type="button" $width={113} $pad={5}>KDJ<Triangle w={15} h={12} /></Chip>
            <Reading $gap={12} $size={38} $tone={color.ink}>
              <ReadingText>K:46.98</ReadingText>
              <TrendArrow />
            </Reading>
          </Reading>
          <Reading $gap={12} $size={38} $tone={color.kdjD}>
            <ReadingText>D:44.61</ReadingText>
            <TrendArrow up />
          </Reading>
          <Reading $gap={12} $size={38} $tone={color.kdjJ}>
            <ReadingText>J:51.71</ReadingText>
            <TrendArrow />
          </Reading>
          <CollapseButton type="button" aria-label="收起">
            <svg width="16" height="28" viewBox="0 0 16 28" fill="none" stroke="#fff" strokeWidth="4" strokeLinecap="round">
              <path d="M14 2L2 14l12 12" />
            </svg>
          </CollapseButton>
        </Legend>

        <ChartPanel>
          <KdjChart />
          <TimeAxis />
        </ChartPanel>

        <Banner>
          <MegaphoneIcon />
          <BannerLink href="#level2">Level-2千档行情免费送，主力动向全透视&gt;&gt;</BannerLink>
          <CloseButton type="button" aria-label="关闭"><CloseIcon /></CloseButton>
        </Banner>

        <Divider />
        <Tabs $columns="repeat(7, 1fr)" $height={104} $pad={28}>
          {sections.map((t) => (
            <Tab key={t} type="button" $active={t === "股吧"}>{t}</Tab>
          ))}
        </Tabs>

        <Community>
          <Podium width="410" height="122" viewBox="0 0 410 122" aria-hidden="true">
            <path d="M8 0h130v27H68l-6 95H0z" fill="#fdf0ee" />
            <path d="M168 0h90l3 122h-94z" fill="#fbe7e5" />
            <path d="M290 0h120v122h-54l-4-68h-58z" fill="#fef3f1" />
            <path d="M110 50h40v72h-44zM280 79h36l2 43h-38z" fill="#fbe9e7" />
            <text x="212" y="98" fontSize="62" fontWeight="900" fill="#fffafa" textAnchor="middle">1</text>
          </Podium>
          <RankLink href="#rank">
            <RankIcon />
            <RankText>A股市场即时排名第<strong>1056</strong>名</RankText>
            <ChevronIcon />
          </RankLink>
          <VoteFrame>
            <VoteBar>
              <VoteButton type="button" $tone="#d9481c">
                <VoteDot><Triangle w={24} h={20} fill="#d9481c" up /></VoteDot>
                看涨 51%
              </VoteButton>
              <VoteButton type="button" $tone="#3fa564">
                49% 看跌
                <VoteDot><Triangle w={24} h={20} fill="#3fa564" /></VoteDot>
              </VoteButton>
            </VoteBar>
          </VoteFrame>
        </Community>
      </Content>

      <BottomBar>
        <IndexButton type="button">
          <Triangle w={22} h={8} fill="#777" up />
          <span>3915.81</span>
          <IndexRow><span>上证</span><Rise>0.65%</Rise></IndexRow>
        </IndexButton>
        <NavButton type="button"><TradeIcon />交易</NavButton>
        <NavButton type="button"><PostIcon />发帖</NavButton>
        <NavButton type="button"><FunctionsIcon />功能</NavButton>
        <NavButton type="button"><WatchIcon />设自选</NavButton>
      </BottomBar>
    </Screen>
  );
}
